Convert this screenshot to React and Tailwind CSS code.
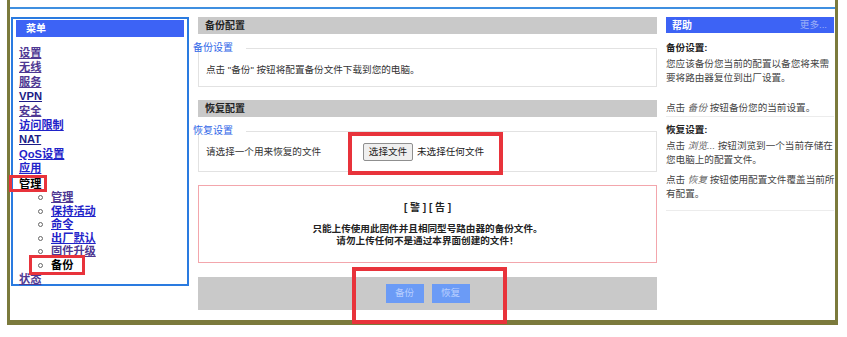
import React from 'react';

const FONT = "font-['Liberation_Sans','Noto_Sans_CJK_SC',sans-serif]";

const topMenu = [
	{ label: "设置", visited: true },
	{ label: "无线", visited: true },
	{ label: "服务", visited: true },
	{ label: "VPN", visited: false, dark: true },
	{ label: "安全", visited: true },
	{ label: "访问限制", visited: false },
	{ label: "NAT", visited: false, dark: true },
	{ label: "QoS设置", visited: false },
	{ label: "应用", visited: false },
];

const subMenu = [
	{ label: "管理", visited: true },
	{ label: "保持活动", visited: false },
	{ label: "命令", visited: false },
	{ label: "出厂默认", visited: false },
	{ label: "固件升级", visited: true },
	{ label: "备份", current: true },
];

const linkClass = (item) =>
	item.visited
		? "text-[#4e3893] underline"
		: item.dark
			? "text-[#1c1c86] underline"
			: "text-[#1f23c9] underline";

// fieldset-like block: legend sits over the top border, nudged left
const Legend = ({ title }) => (
	<div className="flex items-center h-[14px] -ml-[5px]">
		<span className="text-[#2f66e8] text-[10px] leading-[14px]">{title}</span>
		<div className="flex-1 h-px bg-[#e2e2e2] ml-[13px]" />
	</div>
);

const SectionBar = ({ title }) => (
	<div className="h-[17px] bg-[#c9c9c9] flex items-center pl-[7px] text-[10px] font-bold text-[#222]">
		{title}
	</div>
);

const Sidebar = () => (
	<div className="w-[178px] h-[269px] border-2 border-[#2a7be0] shrink-0">
		<div className="mx-[3px] mt-[1px] h-[17px] bg-[#3d63f5] flex items-center pl-[10px] text-white text-[10px] font-bold">
			菜单
		</div>
		<div className="mt-[9px] pl-[6px] text-[11.2px] font-bold">
			{topMenu.map((item) => (
				<div key={item.label} className="leading-[14.4px]">
					<a className={linkClass(item)}>{item.label}</a>
				</div>
			))}
			<div className="leading-[14.4px] mt-[1px] text-black">管理</div>
			{subMenu.map((item) => (
				<div key={item.label} className="flex items-center h-[13.5px] ml-[19px]">
					<span className="w-[5px] h-[5px] rounded-full border border-[#666] mr-[8px]" />
					{item.current ? (
						<span className="text-black">{item.label}</span>
					) : (
						<a className={linkClass(item)}>{item.label}</a>
					)}
				</div>
			))}
			<div className="leading-[14.4px]">
				<a className="text-[#4e3893] underline">状态</a>
			</div>
		</div>
	</div>
);

const MainPanel = () => (
	<div className="w-[459px] shrink-0 text-[9.6px] text-[#333]">
		<SectionBar title="备份配置" />
		<div className="mt-[7px]">
			<Legend title="备份设置" />
			<div className="-mt-[7px] h-[39px] border-x border-b border-[#e2e2e2] pl-[7px] pt-[15px] leading-[14px]">
				点击 "备份" 按钮将配置备份文件下载到您的电脑。
			</div>
		</div>

		<div className="mt-[13px]">
			<SectionBar title="恢复配置" />
		</div>
		<div className="mt-[7px]">
			<Legend title="恢复设置" />
			<div className="-mt-[7px] h-[41px] border-x border-b border-[#e2e2e2] pl-[7px] pt-[12px]">
				<div className="flex items-center h-[18px]">
					<span className="w-[157px]">请选择一个用来恢复的文件</span>
					<span className="h-[18px] w-[50px] border border-[#8f8f8f] bg-[#efefef] rounded-[2px] flex items-center justify-center text-[#222]">
						选择文件
					</span>
					<span className="ml-[4px] text-[#222]">未选择任何文件</span>
				</div>
			</div>
		</div>

		<div className="mt-[13px] h-[78px] border border-[#f3a6ac] flex flex-col items-center pt-[15px] font-bold text-[#222]">
			<div className="leading-[14px] text-[10px]">[ 警 ] [ 告 ]</div>
			<div className="mt-[8px] leading-[12px] text-center">
				只能上传使用此固件并且相同型号路由器的备份文件。
				<br />
				请勿上传任何不是通过本界面创建的文件！
			</div>
		</div>

		<div className="mt-[14px] h-[33px] bg-[#c9c9c9] flex items-center justify-center gap-[8px]">
			<button className="w-[38px] h-[19px] bg-[#6b9bf6] text-[#b9cfff] text-[9.6px]">备份</button>
			<button className="w-[38px] h-[19px] bg-[#6b9bf6] text-[#b9cfff] text-[9.6px]">恢复</button>
		</div>
	</div>
);

const HelpPanel = () => (
	<div className="w-[168px] shrink-0 text-[9.6px] text-[#444]">
		<div className="h-[16px] bg-[#3d63f5] flex items-center justify-between pl-[6px] pr-[7px]">
			<span className="text-white font-bold text-[10px]">帮助</span>
			<span className="text-[#9fb1f7] text-[9.6px]">更多...</span>
		</div>
		<div className="mt-[8px] leading-[14px] font-bold text-[#222]">备份设置:</div>
		<div className="mt-[2px] leading-[14px]">您应该备份您当前的配置以备您将来需要将路由器复位到出厂设置。</div>
		<div className="mt-[16px] leading-[14px]">
			点击 <i className="text-[#666]">备份</i> 按钮备份您的当前设置。
		</div>
		<div className="mt-[1px] h-px bg-[#ececec]" />
		<div className="mt-[6px] leading-[14px] font-bold text-[#222]">恢复设置:</div>
		<div className="mt-[2px] leading-[14px] whitespace-nowrap">
			点击 <i className="text-[#666]">浏览...</i> 按钮浏览到一个当前存储在
			<br />
			您电脑上的配置文件。
		</div>
		<div className="mt-[6px] leading-[13.5px] whitespace-nowrap">
			点击 <i className="text-[#666]">恢复</i> 按钮使用配置文件覆盖当前所
			<br />
			有配置。
		</div>
		<div className="mt-[10px] h-px bg-[#ececec]" />
	</div>
);

export default function App() {
	return (
		<div className={`relative w-[847px] h-[337px] bg-white overflow-hidden ${FONT}`}>
			<div className="ml-[7px] w-[831px] border-x-[3px] border-b-[5px] border-[#7b7a3c]">
				<div className="h-[9px] border-b-2 border-[#3f8fe0]" />
				<div className="flex gap-[9px] pl-[1px] pt-[8px] pb-[10px]">
					<Sidebar />
					<MainPanel />
					<HelpPanel />
				</div>
			</div>

			{/* red annotation boxes */}
			<div className="absolute left-[9px] top-[175px] w-[38px] h-[17px] border-[3px] border-[#e8333b]" />
			<div className="absolute left-[29px] top-[255px] w-[56px] h-[20px] border-[3px] border-[#e8333b]" />
			<div className="absolute left-[348px] top-[132px] w-[155px] h-[43px] border-[4px] border-[#e8333b]" />
			<div className="absolute left-[352px] top-[267px] w-[155px] h-[57px] border-[4px] border-[#e8333b]" />
		</div>
	);
}
